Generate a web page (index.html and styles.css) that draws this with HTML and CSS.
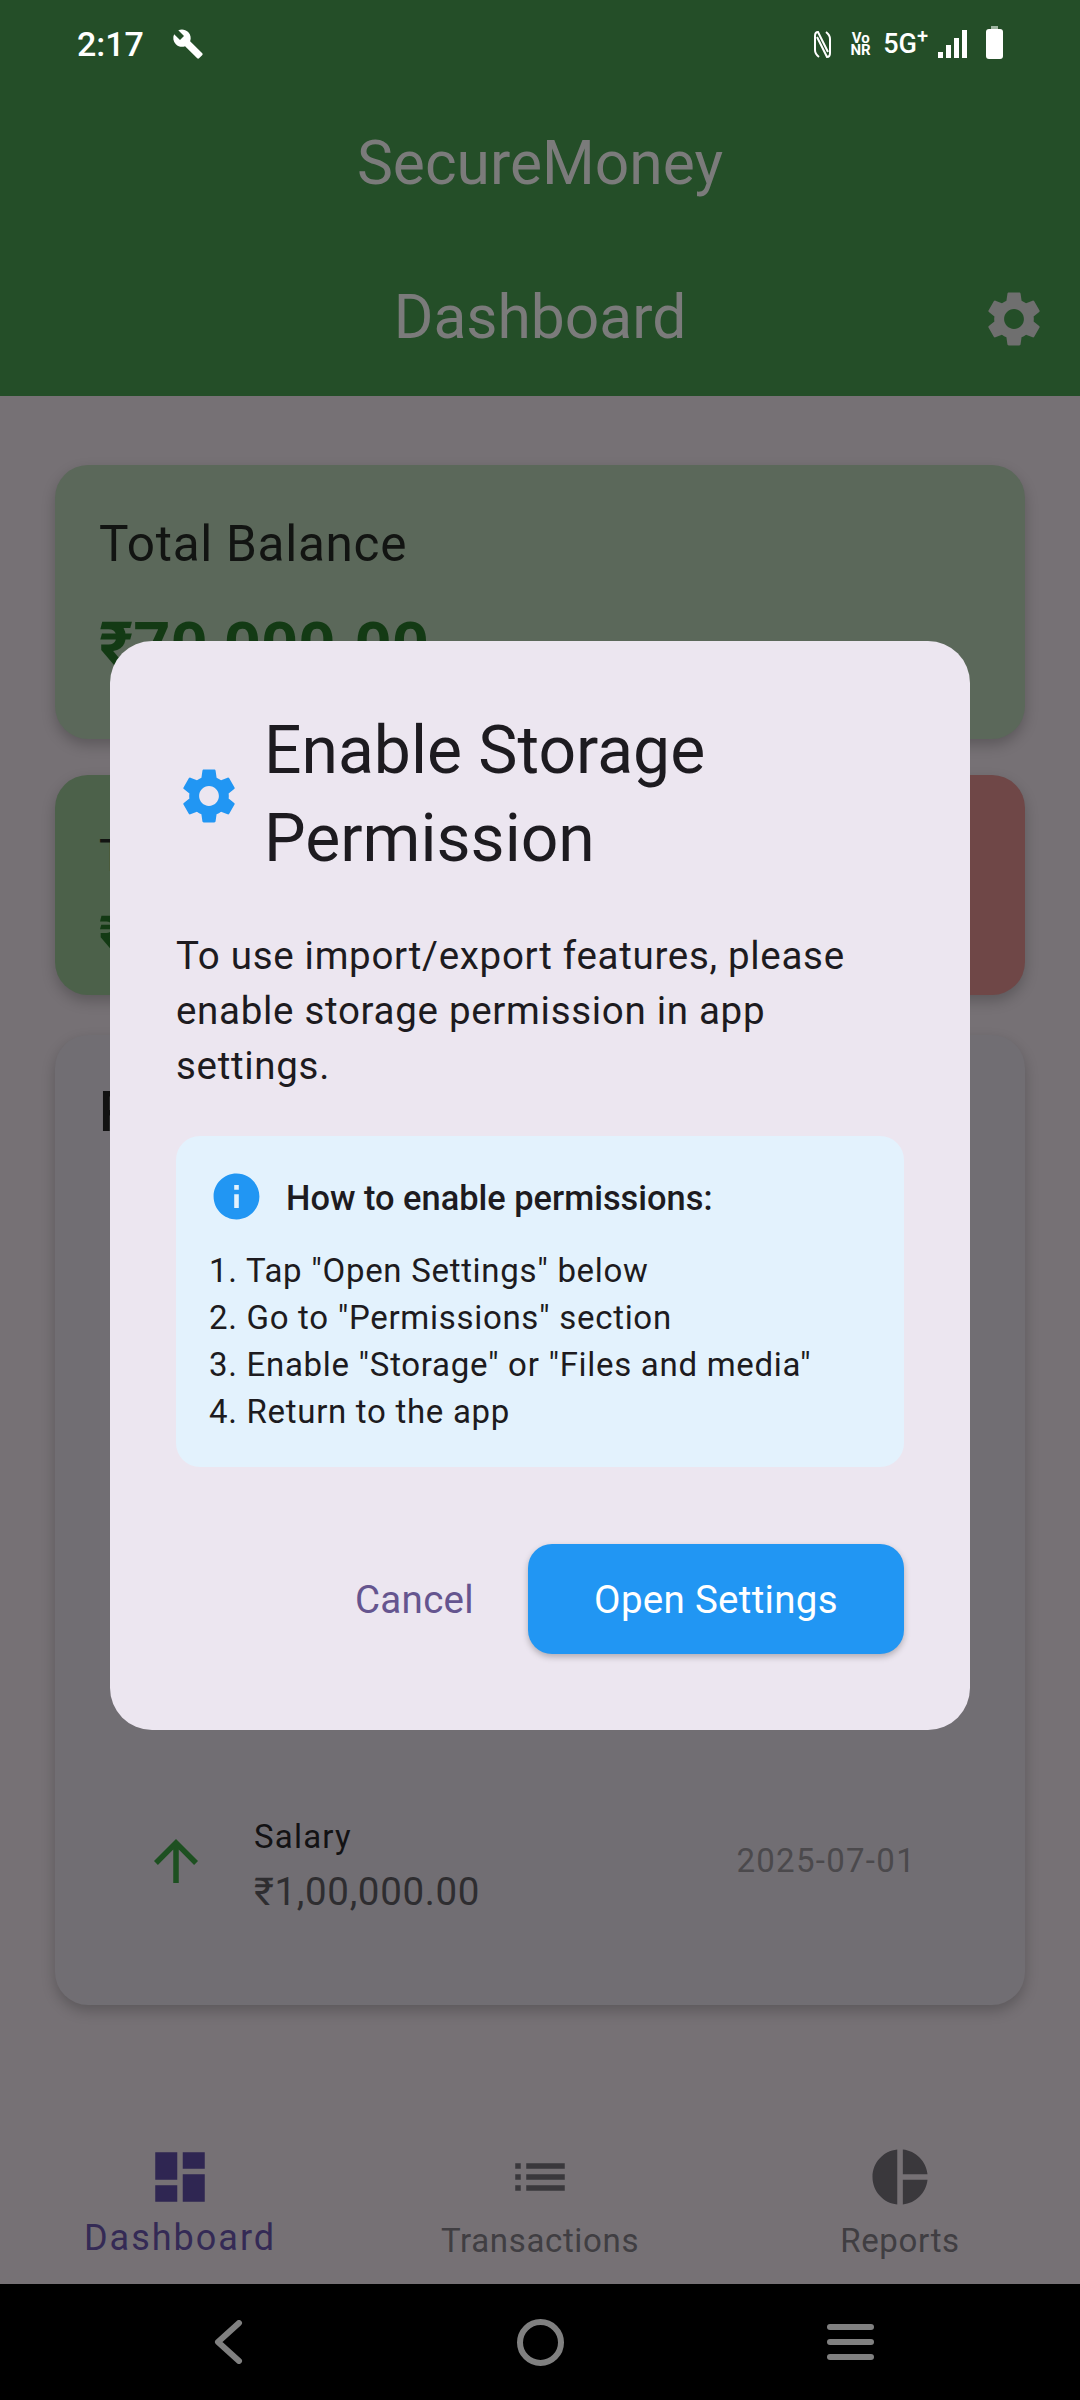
FILE: index.html
```html
<!DOCTYPE html>
<html>
<head>
	<meta charset="utf-8">
	<title>SecureMoney</title>
	<link rel="stylesheet" href="styles.css">
</head>
<body>
<div class="screen">
	<header class="appbar">
		<div class="status">
			<span class="time">2:17</span>
			<svg class="wrench" viewBox="0 0 24 24"><path d="M22.7 19l-9.1-9.1c.9-2.3.4-5-1.5-6.9-2-2-5-2.4-7.4-1.3L9 6 6 9 1.6 4.7C.4 7.1.9 10.1 2.9 12.1c1.9 1.9 4.6 2.4 6.9 1.5l9.1 9.1c.4.4 1 .4 1.4 0l2.3-2.3c.5-.4.5-1.1.1-1.4z"/></svg>
			<div class="status_right">
				<svg class="nfc" viewBox="0 0 17 27"><path d="M5 26 Q1 23 1 19 V5 Q1 1 4 1 L14 21 M12 1 Q16 4 16 8 V22 Q16 26 13 26 L3 6"/></svg>
				<span class="vonr">Vo<br>NR</span>
				<span class="net">5G<sup>+</sup></span>
				<div class="signal"><i class="b1"></i><i class="b2"></i><i class="b3"></i><i class="b4"></i></div>
				<div class="battery"></div>
			</div>
		</div>
		<div class="toolbar">SecureMoney</div>
		<div class="toolbar">
			Dashboard
			<svg class="bar_gear" viewBox="0 0 24 24"><path d="M19.14 12.94c.04-.3.06-.61.06-.94 0-.32-.02-.64-.07-.94l2.03-1.58c.18-.14.23-.41.12-.61l-1.92-3.32c-.12-.22-.37-.29-.59-.22l-2.39.96c-.5-.38-1.03-.7-1.62-.94l-.36-2.54c-.04-.24-.24-.41-.48-.41h-3.84c-.24 0-.43.17-.47.41l-.36 2.54c-.59.24-1.13.57-1.62.94l-2.39-.96c-.22-.08-.47 0-.59.22L2.74 8.87c-.12.21-.08.47.12.61l2.03 1.58c-.05.3-.09.63-.09.94s.02.64.07.94l-2.03 1.58c-.18.14-.23.41-.12.61l1.92 3.32c.12.22.37.29.59.22l2.39-.96c.5.38 1.03.7 1.62.94l.36 2.54c.05.24.24.41.48.41h3.84c.24 0 .44-.17.47-.41l.36-2.54c.59-.24 1.13-.56 1.62-.94l2.39.96c.22.08.47 0 .59-.22l1.92-3.32c.12-.22.07-.47-.12-.61l-2.01-1.58zM12 15.6c-1.98 0-3.6-1.62-3.6-3.6s1.62-3.6 3.6-3.6 3.6 1.62 3.6 3.6-1.62 3.6-3.6 3.6z"/></svg>
		</div>
	</header>

	<main class="content">
		<section class="card balance">
			<div class="balance_label">Total Balance</div>
			<div class="balance_value">₹70,000.00</div>
		</section>
		<div class="totals">
			<section class="card total income">
				<div class="total_label">Total Income</div>
				<div class="total_value">₹1,00,000.00</div>
			</section>
			<section class="card total expense"></section>
		</div>
		<section class="card recent">
			<div class="recent_title">Recent Transactions</div>
			<div class="tx">
				<svg class="tx_icon" viewBox="0 0 24 24"><path d="M4 12l1.41 1.41L11 7.83V20h2V7.83l5.58 5.59L20 12l-8-8-8 8z"/></svg>
				<div class="tx_text">
					<div class="tx_name">Salary</div>
					<div class="tx_amount">₹1,00,000.00</div>
				</div>
				<div class="tx_date">2025-07-01</div>
			</div>
		</section>
	</main>

	<nav class="tabs">
		<div class="tab tab_on">
			<svg viewBox="0 0 24 24"><path d="M3 13h8V3H3v10zm0 8h8v-6H3v6zm10 0h8V11h-8v10zm0-18v6h8V3h-8z"/></svg>
			<span>Dashboard</span>
		</div>
		<div class="tab">
			<svg viewBox="0 0 24 24"><path d="M3 13h2v-2H3v2zm0 4h2v-2H3v2zm0-8h2V7H3v2zm4 4h14v-2H7v2zm0 4h14v-2H7v2zM7 7v2h14V7H7z"/></svg>
			<span>Transactions</span>
		</div>
		<div class="tab">
			<svg viewBox="0 0 24 24"><path d="M11 2v20c-5.07-.5-9-4.79-9-10s3.93-9.5 9-10zm2.03 0v8.99H22c-.47-4.74-4.24-8.52-8.97-8.99zm0 11.01V22c4.74-.47 8.5-4.25 8.97-8.99h-8.97z"/></svg>
			<span>Reports</span>
		</div>
	</nav>

	<div class="sysnav">
		<svg class="sys_back" viewBox="0 0 30 44"><path d="M26 3 L5 22 L26 41"/></svg>
		<div class="sys_home"></div>
		<div class="sys_menu"><i></i><i></i><i></i></div>
	</div>

	<div class="dialog">
		<div class="dialog_head">
			<svg class="dialog_gear" viewBox="0 0 24 24"><path d="M19.14 12.94c.04-.3.06-.61.06-.94 0-.32-.02-.64-.07-.94l2.03-1.58c.18-.14.23-.41.12-.61l-1.92-3.32c-.12-.22-.37-.29-.59-.22l-2.39.96c-.5-.38-1.03-.7-1.62-.94l-.36-2.54c-.04-.24-.24-.41-.48-.41h-3.84c-.24 0-.43.17-.47.41l-.36 2.54c-.59.24-1.13.57-1.62.94l-2.39-.96c-.22-.08-.47 0-.59.22L2.74 8.87c-.12.21-.08.47.12.61l2.03 1.58c-.05.3-.09.63-.09.94s.02.64.07.94l-2.03 1.58c-.18.14-.23.41-.12.61l1.92 3.32c.12.22.37.29.59.22l2.39-.96c.5.38 1.03.7 1.62.94l.36 2.54c.05.24.24.41.48.41h3.84c.24 0 .44-.17.47-.41l.36-2.54c.59-.24 1.13-.56 1.62-.94l2.39.96c.22.08.47 0 .59-.22l1.92-3.32c.12-.22.07-.47-.12-.61l-2.01-1.58zM12 15.6c-1.98 0-3.6-1.62-3.6-3.6s1.62-3.6 3.6-3.6 3.6 1.62 3.6 3.6-1.62 3.6-3.6 3.6z"/></svg>
			<div class="dialog_title">Enable Storage Permission</div>
		</div>
		<p class="dialog_body">To use import/export features, please enable storage permission in app settings.</p>
		<div class="help">
			<div class="help_head">
				<svg class="help_icon" viewBox="0 0 24 24"><path d="M12 2C6.48 2 2 6.48 2 12s4.48 10 10 10 10-4.48 10-10S17.52 2 12 2zm1 15h-2v-6h2v6zm0-8h-2V7h2v2z"/></svg>
				<span>How to enable permissions:</span>
			</div>
			<div class="help_steps">
				<div>1. Tap "Open Settings" below</div>
				<div>2. Go to "Permissions" section</div>
				<div>3. Enable "Storage" or "Files and media"</div>
				<div>4. Return to the app</div>
			</div>
		</div>
		<div class="dialog_actions">
			<span class="btn_cancel">Cancel</span>
			<span class="btn_open">Open Settings</span>
		</div>
	</div>
</div>
</body>
</html>
```

FILE: styles.css
```css
html, body {
	margin: 0;
	padding: 0;
}
body {
	font-family: Roboto, "Liberation Sans", sans-serif;
	background: #767175;
}
.screen {
	position: relative;
	width: 1080px;
	height: 2400px;
	display: flex;
	flex-direction: column;
	overflow: hidden;
	background: #767175;
}

/* top bar */
.appbar {
	background: #244e28;
	height: 396px;
	flex: none;
}
.status {
	height: 88px;
	display: flex;
	align-items: center;
	padding: 0 77px;
	color: #fff;
	box-sizing: border-box;
}
.time {
	font-size: 34px;
	font-weight: 500;
}
.wrench {
	width: 32px;
	height: 32px;
	margin-left: 28px;
	fill: #fff;
}
.status_right {
	margin-left: auto;
	display: flex;
	align-items: center;
}
.nfc {
	width: 17px;
	height: 27px;
	fill: none;
	stroke: #fff;
	stroke-width: 2;
}
.vonr {
	margin-left: 18px;
	width: 23px;
	font-size: 15px;
	line-height: 12.5px;
	font-weight: 700;
	text-align: center;
}
.net {
	margin-left: 11px;
	font-size: 27px;
	font-weight: 500;
}
.net sup {
	font-size: 20px;
	line-height: 0;
}
.signal {
	margin-left: 10px;
	display: flex;
	align-items: flex-end;
	gap: 3px;
	height: 28px;
}
.signal i {
	width: 5px;
	background: #fff;
}
.b1 { height: 6px; }
.b2 { height: 13px; }
.b3 { height: 20px; }
.b4 { height: 28px; }
.battery {
	position: relative;
	margin-left: 19px;
	width: 17px;
	height: 30px;
	background: #fff;
	border-radius: 3px;
}
.battery::before {
	content: "";
	position: absolute;
	left: 5px;
	top: -3px;
	width: 7px;
	height: 3px;
	background: #9fb5a1;
}
.toolbar {
	position: relative;
	height: 154px;
	box-sizing: border-box;
	padding-bottom: 3px;
	display: flex;
	align-items: center;
	justify-content: center;
	font-size: 60.5px;
	color: #7b7b7b;
}
.bar_gear {
	position: absolute;
	right: 33px;
	top: 44px;
	width: 66px;
	height: 66px;
	fill: #6f6f6f;
}

/* dashboard cards */
.content {
	flex: 1;
	padding: 69px 55px 0 55px;
	display: flex;
	flex-direction: column;
	min-height: 0;
}
.card {
	border-radius: 33px;
	box-shadow: 0 6px 14px rgba(0, 0, 0, 0.22);
	box-sizing: border-box;
	padding: 44px;
}
.balance {
	height: 274px;
	background: #5b685a;
}
.balance_label {
	padding-top: 2px;
	font-size: 49.5px;
	line-height: 66px;
	letter-spacing: 0.7px;
	color: #121412;
}
.balance_value {
	margin-top: 25px;
	font-size: 65px;
	line-height: 88px;
	font-weight: 700;
	color: #133a14;
}
.totals {
	display: flex;
	gap: 33px;
	margin-top: 36px;
}
.total {
	flex: 1;
	height: 220px;
}
.income {
	background: #4c614a;
}
.expense {
	background: #6f4747;
}
.total_label {
	margin-top: 8px;
	font-size: 44px;
	line-height: 58px;
	color: #121412;
}
.total_value {
	margin-top: 16px;
	font-size: 49.5px;
	line-height: 66px;
	font-weight: 700;
	color: #133a14;
}
.recent {
	margin-top: 40px;
	height: 970px;
	background: #716e73;
	display: flex;
	flex-direction: column;
	justify-content: space-between;
	padding-bottom: 86px;
}
.recent_title {
	font-size: 55px;
	line-height: 66px;
	font-weight: 500;
	color: #121212;
}
.tx {
	display: flex;
	align-items: center;
	padding: 0 65px 0 44px;
}
.tx_icon {
	width: 66px;
	height: 66px;
	fill: #1d5021;
}
.tx_text {
	margin: 13px 0 0 45px;
	flex: 1;
}
.tx_name {
	font-size: 33px;
	line-height: 44px;
	letter-spacing: 1.2px;
	color: #131214;
}
.tx_amount {
	margin-top: 5px;
	font-size: 38.5px;
	line-height: 55px;
	letter-spacing: 0.65px;
	color: #2e2d30;
}
.tx_date {
	font-size: 33px;
	letter-spacing: 1.3px;
	color: #4b494c;
}

/* bottom tabs */
.tabs {
	height: 164px;
	flex: none;
	display: flex;
	box-sizing: border-box;
	padding-top: 24px;
}
.tab {
	flex: 1;
	display: flex;
	flex-direction: column;
	align-items: center;
	color: #403e42;
	font-size: 33px;
	letter-spacing: 0.65px;
}
.tab svg {
	width: 66px;
	height: 66px;
	fill: #3a383c;
}
.tab span {
	margin-top: 11px;
}
.tab_on {
	color: #342a55;
	font-size: 36px;
	letter-spacing: 2px;
}
.tab_on svg {
	fill: #2f2652;
}
.tab_on span {
	margin-top: 7px;
}

/* system nav */
.sysnav {
	height: 116px;
	flex: none;
	background: #000;
	display: flex;
	align-items: center;
}
.sys_back {
	width: 30px;
	height: 44px;
	margin-left: 213px;
	fill: none;
	stroke: #808080;
	stroke-width: 6;
	stroke-linecap: round;
	stroke-linejoin: round;
}
.sys_home {
	width: 47px;
	height: 47px;
	margin-left: 274px;
	box-sizing: border-box;
	border: 6px solid #808080;
	border-radius: 50%;
}
.sys_menu {
	margin-left: 263px;
	width: 47px;
	display: flex;
	flex-direction: column;
	gap: 9px;
}
.sys_menu i {
	height: 6px;
	border-radius: 3px;
	background: #808080;
}

/* permission dialog */
.dialog {
	position: absolute;
	left: 110px;
	top: 641px;
	width: 860px;
	height: 1089px;
	box-sizing: border-box;
	padding: 66px;
	background: #ece6f0;
	border-radius: 42px;
	color: #1d1b20;
}
.dialog_head {
	display: flex;
	align-items: center;
	gap: 22px;
}
.dialog_gear {
	width: 66px;
	height: 66px;
	flex: none;
	margin-top: 2px;
	fill: #2196f3;
}
.dialog_title {
	font-size: 66px;
	line-height: 88px;
	width: 480px;
}
.dialog_body {
	margin: 45px 0 0 0;
	font-size: 38.5px;
	line-height: 55px;
	letter-spacing: 0.7px;
}
.help {
	margin-top: 43px;
	padding: 33px;
	background: #e3f2fd;
	border-radius: 24px;
}
.help_head {
	display: flex;
	align-items: center;
	gap: 22px;
	font-size: 34.4px;
	font-weight: 500;
}
.help_head span {
	padding-top: 2px;
}
.help_icon {
	width: 55px;
	height: 55px;
	fill: #2196f3;
}
.help_steps {
	margin: 23px 0 -1px 0;
	font-size: 33px;
	line-height: 47px;
	letter-spacing: 0.7px;
}
.dialog_actions {
	margin-top: 77px;
	display: flex;
	align-items: center;
	justify-content: flex-end;
}
.btn_cancel {
	color: #65558f;
	font-size: 38.5px;
	letter-spacing: 0.3px;
	margin-right: 54px;
}
.btn_open {
	width: 376px;
	height: 110px;
	display: flex;
	align-items: center;
	justify-content: center;
	background: #2196f3;
	color: #fff;
	border-radius: 24px;
	font-size: 38.5px;
	letter-spacing: 0.3px;
	box-shadow: 0 3px 6px rgba(0, 0, 0, 0.25);
}
```
